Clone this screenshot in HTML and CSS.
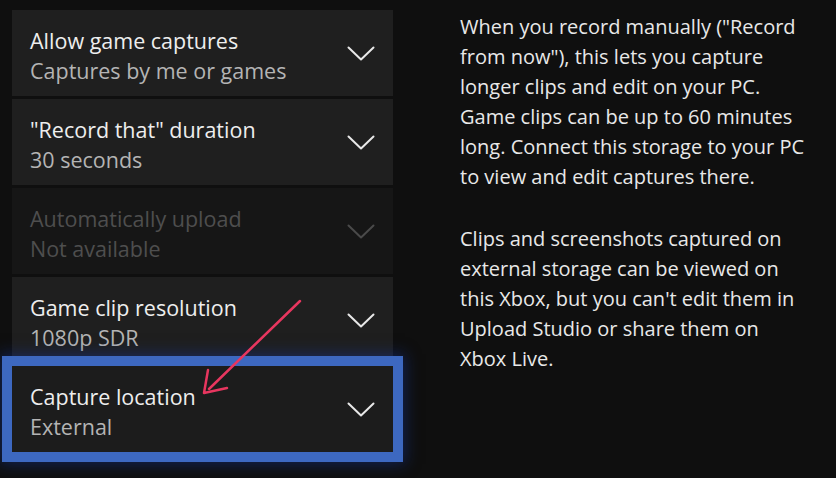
FILE: index.html
```html
<!DOCTYPE html>
<html lang="en">
<head>
    <meta charset="UTF-8" />
    <title>Capture settings</title>
    <link rel="stylesheet" href="styles.css">
</head>
<body>

    <div class="screen">
        <div class="settings">
            <div class="setting">
                <div class="setting-text">
                    <div class="setting-title">Allow game captures</div>
                    <div class="setting-value">Captures by me or games</div>
                </div>
                <svg class="chevron" viewBox="0 0 28 15"><polyline points="1.5,1.5 14,13.5 26.5,1.5" /></svg>
            </div>
            <div class="setting">
                <div class="setting-text">
                    <div class="setting-title">"Record that" duration</div>
                    <div class="setting-value">30 seconds</div>
                </div>
                <svg class="chevron" viewBox="0 0 28 15"><polyline points="1.5,1.5 14,13.5 26.5,1.5" /></svg>
            </div>
            <div class="setting disabled">
                <div class="setting-text">
                    <div class="setting-title">Automatically upload</div>
                    <div class="setting-value">Not available</div>
                </div>
                <svg class="chevron" viewBox="0 0 28 15"><polyline points="1.5,1.5 14,13.5 26.5,1.5" /></svg>
            </div>
            <div class="setting">
                <div class="setting-text">
                    <div class="setting-title">Game clip resolution</div>
                    <div class="setting-value">1080p SDR</div>
                </div>
                <svg class="chevron" viewBox="0 0 28 15"><polyline points="1.5,1.5 14,13.5 26.5,1.5" /></svg>
            </div>
            <div class="setting focused">
                <div class="setting-text">
                    <div class="setting-title">Capture location</div>
                    <div class="setting-value">External</div>
                </div>
                <svg class="chevron" viewBox="0 0 28 15"><polyline points="1.5,1.5 14,13.5 26.5,1.5" /></svg>
            </div>
        </div>

        <div class="description">
            <p>When you record manually ("Record<br />
            from now"), this lets you capture<br />
            longer clips and edit on your PC.<br />
            Game clips can be up to 60 minutes<br />
            long. Connect this storage to your PC<br />
            to view and edit captures there.</p>
            <p>Clips and screenshots captured on<br />
            external storage can be viewed on<br />
            this Xbox, but you can't edit them in<br />
            Upload Studio or share them on<br />
            Xbox Live.</p>
        </div>

        <!-- annotation arrow drawn over the list -->
        <svg class="annotation" viewBox="0 0 836 478">
            <line x1="300" y1="301" x2="209" y2="389" />
            <polyline points="208,370 204,393 227,388" />
        </svg>
    </div>

</body>
</html>
```

FILE: styles.css
```css
body {
    margin: 0;
    background: #0f0f0f;
    font-family: "Open Sans", "Noto Sans", sans-serif;
    font-size: 20px;
    line-height: 30px;
    color: #ededed;
}

.screen {
    position: relative;
    display: flex;
    width: 836px;
    height: 478px;
    overflow: hidden;
}

.settings {
    display: flex;
    flex-direction: column;
    gap: 3px;
    width: 381px;
    padding: 10px 0 0 12px;
}

.setting {
    display: flex;
    align-items: center;
    height: 86px;
    box-sizing: border-box;
    padding: 0 18px 0 18px;
    background: #1f1f1f;
}

.setting-text {
    flex: 1;
    padding-top: 5px;
    font-size: 21.5px;
}

.setting-title {
    color: #eeeeee;
}

.setting-value {
    color: #b4b4b4;
}

.chevron {
    width: 28px;
    height: 15px;
    fill: none;
    stroke: #e8e8e8;
    stroke-width: 2;
    stroke-linecap: round;
    stroke-linejoin: round;
}

.setting.disabled {
    background: #161616;
}

.setting.disabled .setting-title,
.setting.disabled .setting-value {
    color: #4e4e4e;
}

.setting.disabled .chevron {
    stroke: #4a4a4a;
}

.setting.focused {
    background: #1c1c1c;
    box-shadow: 0 0 0 10px #3d68c0, 0 0 14px 12px rgba(20, 50, 140, 0.55);
}

.description {
    padding: 12px 0 0 67px;
    color: #e8e8e8;
    white-space: nowrap;
}

.description p {
    margin: 0 0 32px 0;
}

.annotation {
    position: absolute;
    left: 0;
    top: 0;
    width: 836px;
    height: 478px;
    pointer-events: none;
    fill: none;
    stroke: #e8365f;
    stroke-width: 2.5;
    stroke-linecap: round;
    stroke-linejoin: round;
}
```
